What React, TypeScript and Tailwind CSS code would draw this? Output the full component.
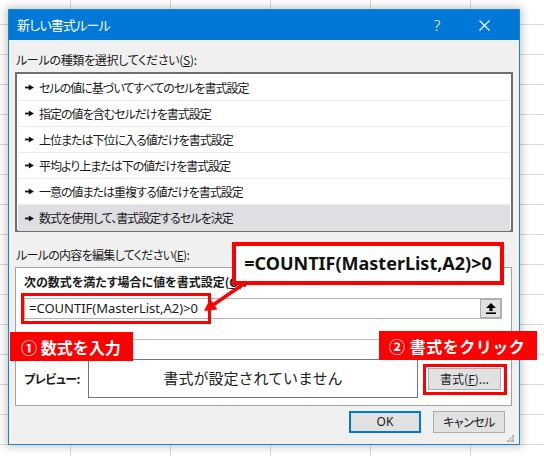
import React from "react";

const jp = "font-['Noto_Sans_CJK_JP',sans-serif] [font-feature-settings:'palt']";

const rules = [
  "セルの値に基づいてすべてのセルを書式設定",
  "指定の値を含むセルだけを書式設定",
  "上位または下位に入る値だけを書式設定",
  "平均より上または下の値だけを書式設定",
  "一意の値または重複する値だけを書式設定",
  "数式を使用して、書式設定するセルを決定",
];

function Pointer() {
  return (
    <svg width="9" height="7" viewBox="0 0 9 7" className="shrink-0">
      <rect x="0" y="2.6" width="5" height="1.8" fill="#111" />
      <polygon points="3.8,0.6 9,3.5 3.8,6.4" fill="#111" />
    </svg>
  );
}

export default function App() {
  return (
    <div
      className={`relative w-[544px] h-[456px] overflow-hidden bg-white bg-[linear-gradient(to_right,#d9d9d9_1px,transparent_1px),linear-gradient(to_bottom,#d9d9d9_1px,transparent_1px)] bg-[size:100px_30px] bg-[position:70px_24px] pt-[9px] pl-[8px] ${jp}`}
    >
      {/* dialog */}
      <div className="w-[512px] h-[436px] border border-[#1883d7] bg-[#f0f0f0] shadow-[0_0_8px_2px_rgba(0,0,0,0.22)] flex flex-col">
        <div className="h-[30px] bg-[#0078d7] flex items-center pl-[8px] text-white text-[13px]">
          <span className="flex-1 tracking-[-0.8px]">新しい書式ルール</span>
          <span className="text-[15px] w-[14px] mr-[31px] font-['Noto_Sans',sans-serif] font-light">?</span>
          <svg width="11" height="11" viewBox="0 0 11 11" className="mr-[29px]">
            <path d="M0.5 0.5 L10.5 10.5 M10.5 0.5 L0.5 10.5" stroke="white" strokeWidth="1.2" />
          </svg>
        </div>

        <div className="px-[6px] flex flex-col text-[12px] text-[#1a1a1a]">
          <div className="mt-[12px] h-[16px] leading-[16px] pl-px tracking-[-0.3px]">
            ルールの種類を選択してください(<span className="underline">S</span>):
          </div>
          <div className="mt-[4px] w-[498px] h-[160px] border-2 border-[#6f6f6f] bg-white p-px">
            {rules.map((r, i) => (
              <div
                key={r}
                className={`h-[26px] flex items-center gap-[5px] pl-[7px] ${
                  i === 5 ? "bg-[#dfdfe3]" : "border-b border-[#ebebeb]"
                }`}
              >
                <Pointer />
                <span className="tracking-[-1px]">{r}</span>
              </div>
            ))}
          </div>

          <div className="mt-[15px] h-[16px] leading-[16px] pl-px tracking-[-0.7px]">
            ルールの内容を編集してください(<span className="underline">E</span>):
          </div>
          <div className="mt-[4px] w-[497px] h-[139px] border border-[#a3a3a3] bg-white flex flex-col">
            <div className="mt-[6px] ml-[8px] h-[16px] leading-[16px] font-bold">
              次の数式を満たす場合に値を書式設定(<span className="underline">O</span>):
            </div>
            <div className="mt-[8px] ml-[8px] w-[478px] h-[21px] border border-[#b4b4b4] flex items-center">
              <span className="flex-1 pl-[4px] text-[13px] font-['Noto_Sans',sans-serif]">
                =COUNTIF(MasterList,A2)&gt;0
              </span>
              <div className="w-[21px] h-[19px] bg-[#e1e1e1] border border-[#adadad] flex items-center justify-center">
                <svg width="10" height="11" viewBox="0 0 10 11">
                  <polygon points="5,0 10,5 6.6,5 6.6,8 3.4,8 3.4,5 0,5" fill="#000" />
                  <rect x="0" y="9.4" width="10" height="1.6" fill="#000" />
                </svg>
              </div>
            </div>
            <div className="mt-[20px] h-px bg-[#bdbdbd]" />
            <div className="mt-[19px] ml-[8px] flex items-center">
              <span className="w-[64px] font-bold tracking-[-0.5px]">プレビュー:</span>
              <div className="w-[330px] h-[39px] border border-[#767676] flex items-center justify-center text-[15px] [font-feature-settings:normal] text-[#222]">
                書式が設定されていません
              </div>
              <div className="ml-[10px] w-[73px] h-[22px] bg-[#e1e1e1] border border-[#adadad] flex items-center justify-center">
                書式(<span className="underline">F</span>)...
              </div>
            </div>
          </div>

          <div className="mt-[5px] flex justify-end gap-[12px] pr-[8px]">
            <div className="w-[72px] h-[22px] bg-[#e1e1e1] border-2 border-[#0078d7] flex items-center justify-center font-['Noto_Sans',sans-serif]">
              OK
            </div>
            <div className="w-[72px] h-[22px] bg-[#e1e1e1] border border-[#adadad] flex items-center justify-center tracking-[-0.5px]">
              キャンセル
            </div>
          </div>
        </div>
        <div className="flex-1 flex items-end justify-end pr-[5px] pb-[2px]">
          <svg width="7" height="7" viewBox="0 0 7 7">
            <rect x="5" y="0" width="2" height="2" fill="#b4b4b4" />
            <rect x="2.5" y="2.5" width="2" height="2" fill="#b4b4b4" />
            <rect x="5" y="2.5" width="2" height="2" fill="#b4b4b4" />
            <rect x="0" y="5" width="2" height="2" fill="#b4b4b4" />
            <rect x="2.5" y="5" width="2" height="2" fill="#b4b4b4" />
            <rect x="5" y="5" width="2" height="2" fill="#b4b4b4" />
          </svg>
        </div>
      </div>

      {/* annotations */}
      <div className="absolute left-[21px] top-[293px] w-[190px] h-[31px] border-[3px] border-[#ff0000]" />
      <div className="absolute left-[423px] top-[364px] w-[84px] h-[31px] border-[3px] border-[#ff0000]" />
      <div className="absolute left-[232px] top-[242px] w-[272px] h-[43px] border-4 border-[#ff0000] bg-white flex items-center justify-center text-[18px] font-bold text-[#111] font-['Noto_Sans',sans-serif]">
        =COUNTIF(MasterList,A2)&gt;0
      </div>
      <svg className="absolute left-0 top-0" width="544" height="456" viewBox="0 0 544 456">
        <line x1="245" y1="283" x2="213" y2="305" stroke="#ff0000" strokeWidth="3.5" />
        <polygon points="204,311 217.5,309.5 210,298.8" fill="#ff0000" />
      </svg>
      <div className="absolute left-[10px] top-[332px] w-[123px] h-[29px] bg-[#ff0000] text-white font-bold text-[16px] flex items-center pl-[11px] [font-feature-settings:normal]">
        ① 数式を入力
      </div>
      <div className="absolute left-[379px] top-[331px] w-[158px] h-[29px] bg-[#ff0000] text-white font-bold text-[16px] flex items-center pl-[10px] tracking-[0.5px] [font-feature-settings:normal]">
        ② 書式をクリック
      </div>
    </div>
  );
}
